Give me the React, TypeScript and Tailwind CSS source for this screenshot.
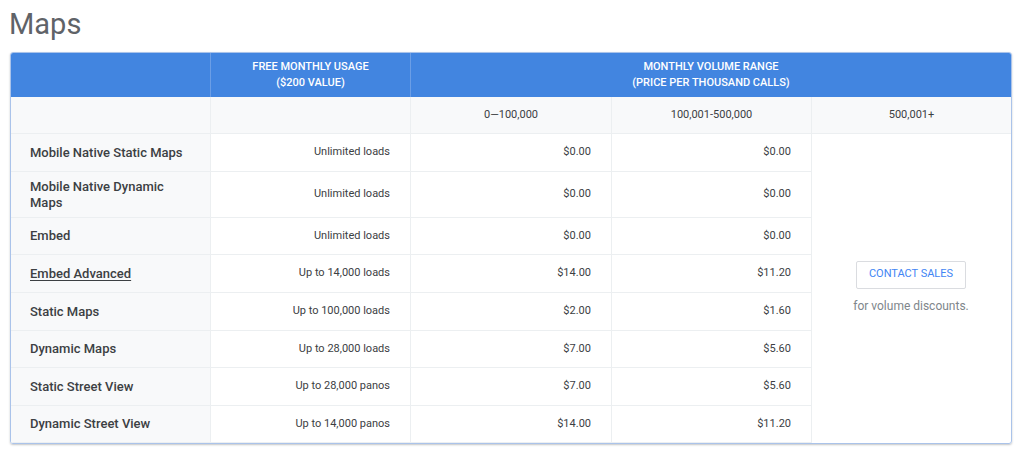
import React from "react";

const rows: [string, string, string, string, boolean?][] = [
  ["Mobile Native Static Maps", "Unlimited loads", "$0.00", "$0.00"],
  ["Mobile Native Dynamic Maps", "Unlimited loads", "$0.00", "$0.00"],
  ["Embed", "Unlimited loads", "$0.00", "$0.00"],
  ["Embed Advanced", "Up to 14,000 loads", "$14.00", "$11.20", true],
  ["Static Maps", "Up to 100,000 loads", "$2.00", "$1.60"],
  ["Dynamic Maps", "Up to 28,000 loads", "$7.00", "$5.60"],
  ["Static Street View", "Up to 28,000 panos", "$7.00", "$5.60"],
  ["Dynamic Street View", "Up to 14,000 panos", "$14.00", "$11.20"],
];

export default function App() {
  return (
    <div className="w-[1024px] h-[454px] bg-white overflow-hidden" style={{ fontFamily: "Roboto, 'Liberation Sans', sans-serif" }}>
      <div className="pl-[9px] pt-[6px] h-[52px] text-[29px] leading-[36px] text-[#5f6368]">Maps</div>
      <div className="ml-[10px] w-[1002px] rounded-[3px] border border-[#aac3ea] shadow-[0_1px_2px_rgba(60,64,67,0.3)] overflow-hidden">
        <div
          className="grid text-[#3c4043]"
          style={{ gridTemplateColumns: "200px 200px 201px 200px 1fr", gridTemplateRows: "44px 37px 38px 46px 37px 38px 38px 37px 38px 37px" }}
        >
          <div className="bg-[#4285e0] border-r border-[#6b9ee6]" />
          <div className="bg-[#4285e0] border-r border-[#6b9ee6] flex flex-col items-center justify-center text-white text-[11px] font-medium leading-[16px]">
            <span>FREE MONTHLY USAGE</span><span>($200 VALUE)</span>
          </div>
          <div className="col-span-3 bg-[#4285e0] flex flex-col items-center justify-center text-white text-[11px] font-medium leading-[16px]">
            <span>MONTHLY VOLUME RANGE</span><span>(PRICE PER THOUSAND CALLS)</span>
          </div>
          <div className="bg-[#f8f9fa] border-r border-b border-[#eceff1]" />
          <div className="bg-[#f8f9fa] border-r border-b border-[#eceff1]" />
          <div className="bg-[#f8f9fa] border-r border-b border-[#eceff1] flex items-center justify-center text-[11px]">0—100,000</div>
          <div className="bg-[#f8f9fa] border-r border-b border-[#eceff1] flex items-center justify-center text-[11px]">100,001-500,000</div>
          <div className="bg-[#f8f9fa] border-b border-[#eceff1] flex items-center justify-center text-[11px]">500,001+</div>
          {rows.map((r, i) => (
            <React.Fragment key={r[0]}>
              <div className="bg-[#f8f9fa] border-r border-b border-[#eceff1] flex items-center pl-[19px] pr-4 text-[13px] font-medium leading-[16px]">
                <span className={r[4] ? "underline underline-offset-2" : ""}>{r[0]}</span>
              </div>
              <div className="border-r border-b border-[#eceff1] flex items-center justify-end pr-[20px] text-[11px]">{r[1]}</div>
              <div className="border-r border-b border-[#eceff1] flex items-center justify-end pr-[20px] text-[11px]">{r[2]}</div>
              <div className="border-r border-b border-[#eceff1] flex items-center justify-end pr-[20px] text-[11px]">{r[3]}</div>
              {i === 0 && (
                <div className="row-span-8 flex flex-col items-center justify-center gap-[8px] pr-[1px]">
                  <div className="border border-[#dadce0] rounded-[2px] px-[12px] h-[28px] flex items-center text-[11px] text-[#4285f4]">CONTACT SALES</div>
                  <div className="text-[12px] text-[#80868b] mb-[2px]">for volume discounts.</div>
                </div>
              )}
            </React.Fragment>
          ))}
        </div>
      </div>
    </div>
  );
}
